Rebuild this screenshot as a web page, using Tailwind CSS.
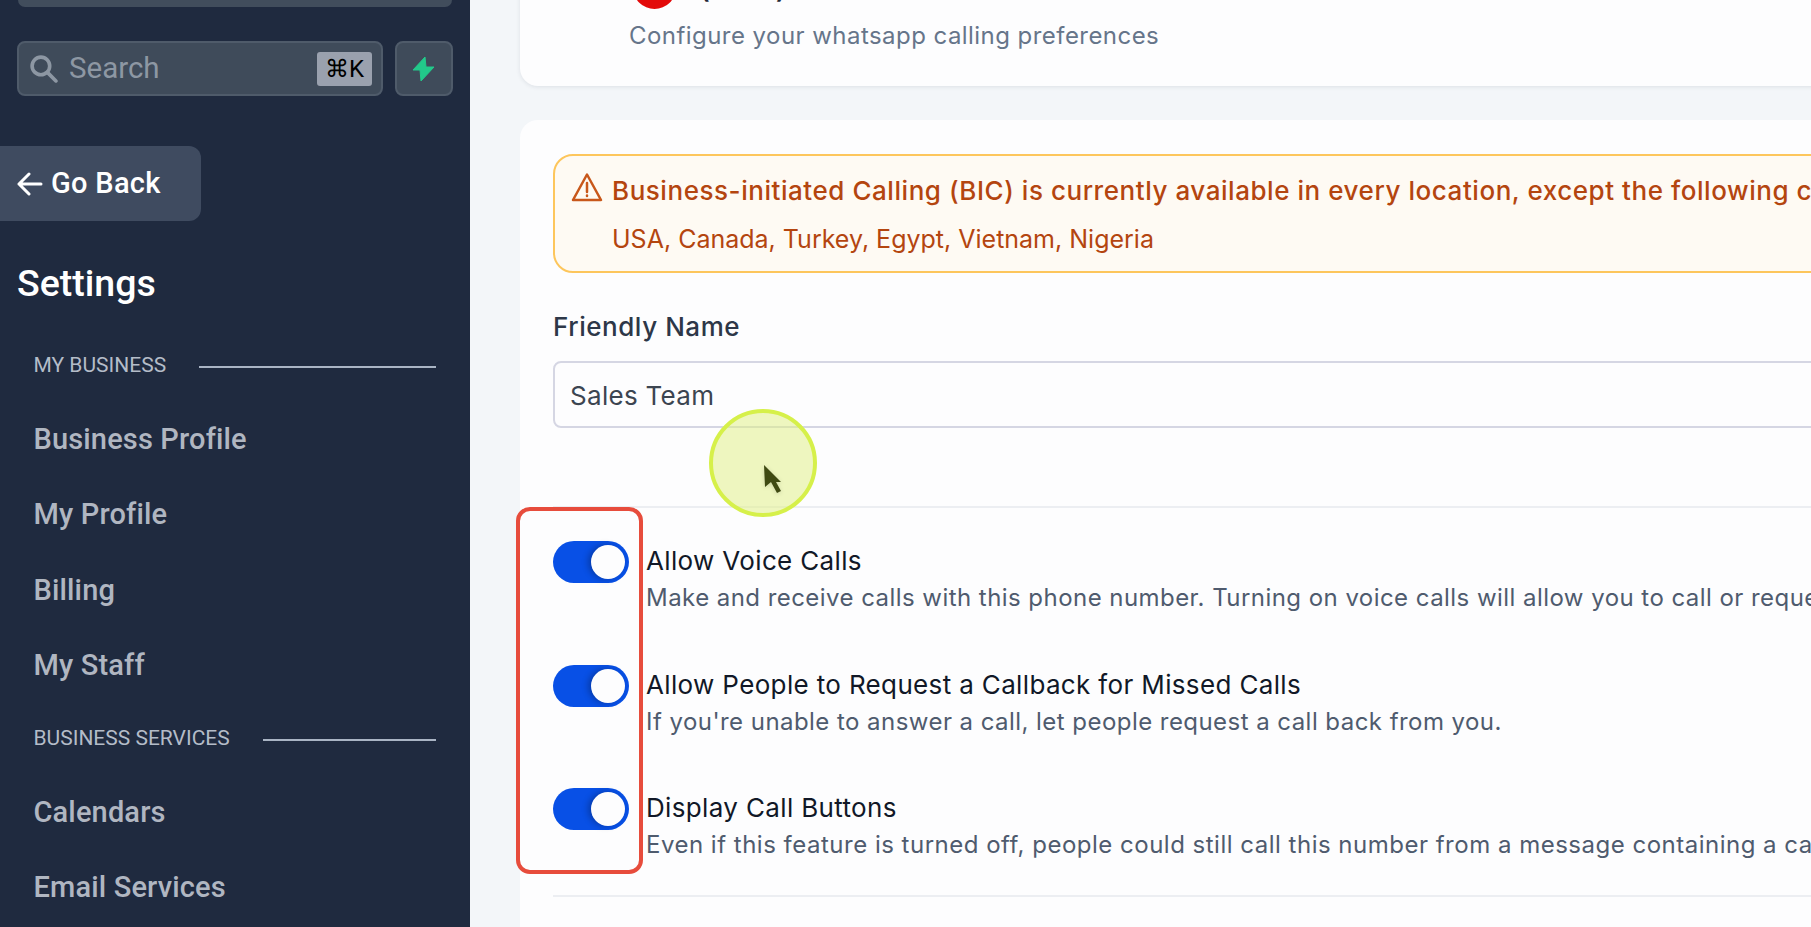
<!DOCTYPE html>
<html lang="en">
<head>
    <meta charset="UTF-8">
    <meta name="viewport" content="width=device-width, initial-scale=1.0">
    <title>Settings</title>
    <script src="https://cdn.jsdelivr.net/npm/@tailwindcss/browser@4"></script>
</head>
<body class="h-screen overflow-hidden bg-[#f3f6f9] font-['Inter',sans-serif]">
<div class="flex h-[927px] w-[1811px] overflow-hidden">

    <!-- sidebar -->
    <aside class="w-[470px] shrink-0 h-full overflow-hidden bg-[#1f2a3f] font-['Roboto',sans-serif]">
        <div class="ml-[18px] mr-[18px] h-[7px] rounded-b-xl bg-[#414d5c]"></div>

        <div class="mt-[34px] pl-[17px] pr-[17px] flex gap-[12px]">
            <div class="flex items-center w-[366px] h-[55px] rounded-lg border-2 border-[#4f5b6a] bg-[#3f4b5a] pl-[10px] pr-[9px]">
                <svg class="w-[29px] h-[29px] shrink-0" viewBox="0 0 28 28" fill="none" stroke="#8d97a3" stroke-width="3.500" stroke-linecap="round">
                    <circle cx="11.5" cy="11.5" r="8.5"/>
                    <path d="M18 18l8 8"/>
                </svg>
                <span class="ml-[11px] text-[29.500px] text-[#8d97a3]">Search</span>
                <span class="ml-auto flex items-center justify-center w-[55px] h-[34px] rounded-[3px] bg-[#9aa1ae] text-[24px] text-black">⌘K</span>
            </div>
            <div class="flex items-center justify-center w-[58px] h-[55px] rounded-lg border-2 border-[#4f5b6a] bg-[#3f4b5a]">
                <svg class="w-[24px] h-[26px] -translate-x-[1px]" viewBox="0 0 24 26" fill="#22c98a" stroke="#22c98a" stroke-linejoin="round">
                    <path d="M14 1L2 14h7l1 11 13-14h-8z"/>
                </svg>
            </div>
        </div>

        <div class="mt-[50px] flex items-center w-[201px] h-[75px] rounded-r-xl bg-[#3f4b60] pl-[17px] text-white">
            <svg class="w-[26px] h-[24px]" viewBox="0 0 26 24" fill="none" stroke="currentColor" stroke-width="3" stroke-linecap="round" stroke-linejoin="round">
                <path d="M24 12H2M12 2L2 12l10 10"/>
            </svg>
            <span class="ml-[8px] text-[29px] tracking-[0.3px] font-medium">Go Back</span>
        </div>

        <h1 class="mt-[41px] pl-[17px] text-[37.500px] leading-[42px] font-medium text-white">Settings</h1>

        <div class="mt-[47px] pl-[33.500px] pr-[34px] flex items-center h-[30px]">
            <span class="text-[21px] text-[#b4bcc8]">MY BUSINESS</span>
            <span class="ml-[33px] flex-1 h-[2px] bg-[#a9b4c4] translate-y-[1px]"></span>
        </div>
        <nav class="mt-[41px] pl-[33.500px] flex flex-col gap-[41.300px] text-[29px] tracking-[0.15px] leading-[34px] font-medium text-[#b0b6c1]">
            <a>Business Profile</a>
            <a>My Profile</a>
            <a>Billing</a>
            <a>My Staff</a>
        </nav>
        <div class="mt-[42px] pl-[33.500px] pr-[34px] flex items-center h-[30px]">
            <span class="text-[21px] text-[#b4bcc8]">BUSINESS SERVICES</span>
            <span class="ml-[33px] flex-1 h-[2px] bg-[#a9b4c4] translate-y-[1px]"></span>
        </div>
        <nav class="mt-[41px] pl-[33.500px] flex flex-col gap-[41.300px] text-[29px] tracking-[0.15px] leading-[34px] font-medium text-[#b0b6c1]">
            <a>Calendars</a>
            <a>Email Services</a>
        </nav>
    </aside>

    <!-- main -->
    <main class="relative flex-1 min-w-0 overflow-hidden pl-[50px]">
        <section class="-mt-[50px] w-[1600px] h-[136px] rounded-[18px] bg-[#fdfdfe] shadow-[0_1px_4px_rgba(30,41,59,0.1)] pl-[109px] pt-[15px]">
            <div class="flex items-center h-[44px] pl-[4px]">
                <span class="w-[43px] h-[43px] rounded-full bg-[#e30a0a] shrink-0"></span>
                <span class="ml-[24px] text-[26px] font-semibold text-[#1f2937] translate-y-[2px]">(5550)</span>
            </div>
            <p class="mt-[13px] text-[24px] leading-[28px] tracking-[0.45px] text-[#66758a]">Configure your whatsapp calling preferences</p>
        </section>

        <section class="mt-[34px] w-[1600px] h-[900px] rounded-[18px] bg-[#fdfdfe] pl-[33px] pt-[34px]">
            <div class="w-[1500px] h-[119px] rounded-[20px] border-2 border-[#fdc65c] bg-[#fefaf3] pl-[16px] pt-[16px] text-[#b4450f]">
                <div class="flex items-center h-[36px]">
                    <svg class="w-[32px] h-[30px] shrink-0 -translate-y-[3px]" viewBox="0 0 32 30" fill="none" stroke="#c8571a" stroke-width="2.500" stroke-linejoin="round" stroke-linecap="round">
                        <path d="M16 2.500L30 28H2z"/>
                        <path d="M16 11v9M16 23.500v0.500"/>
                    </svg>
                    <span class="ml-[9px] text-[26px] tracking-[0.55px] font-medium whitespace-nowrap">Business-initiated Calling (BIC) is currently available in every location, except the following countries:</span>
                </div>
                <p class="mt-[15px] pl-[41px] text-[25px] leading-[32px]">USA, Canada, Turkey, Egypt, Vietnam, Nigeria</p>
            </div>

            <label class="block mt-[36px] text-[26px] tracking-[0.55px] leading-[36px] font-medium text-[#2d3748]">Friendly Name</label>
            <div class="mt-[16px] flex items-center w-[1500px] h-[67px] rounded-lg border-2 border-[#d5d6e3] bg-[#fdfdfe] pl-[15px] pt-[2px] text-[26px] tracking-[0.3px] text-[#3c4551]">Sales Team</div>

            <div class="mt-[78px] w-[1500px] h-[2px] bg-[#eceef2]"></div>

            <div class="mt-[33px] flex flex-col gap-[51.500px]">
                <div class="flex">
                    <span class="flex items-center justify-end w-[76px] h-[42px] rounded-full bg-[#0850e6] pr-[4px] shrink-0">
                        <span class="w-[34px] h-[34px] rounded-full bg-[#fdfdfe] shadow-[-3px_0_6px_rgba(0,0,0,0.25)]"></span>
                    </span>
                    <div class="ml-[17px] whitespace-nowrap">
                        <div class="text-[26px] tracking-[0.35px] leading-[40px] text-[#111827]">Allow Voice Calls</div>
                        <div class="pt-[1px] text-[24px] leading-[31px] tracking-[0.45px] text-[#4f5b6e]">Make and receive calls with this phone number. Turning on voice calls will allow you to call or request a call</div>
                    </div>
                </div>
                <div class="flex">
                    <span class="flex items-center justify-end w-[76px] h-[42px] rounded-full bg-[#0850e6] pr-[4px] shrink-0">
                        <span class="w-[34px] h-[34px] rounded-full bg-[#fdfdfe] shadow-[-3px_0_6px_rgba(0,0,0,0.25)]"></span>
                    </span>
                    <div class="ml-[17px] whitespace-nowrap">
                        <div class="text-[26px] tracking-[0.35px] leading-[40px] text-[#111827]">Allow People to Request a Callback for Missed Calls</div>
                        <div class="pt-[1px] text-[24px] leading-[31px] tracking-[0.45px] text-[#4f5b6e]">If you're unable to answer a call, let people request a call back from you.</div>
                    </div>
                </div>
                <div class="flex">
                    <span class="flex items-center justify-end w-[76px] h-[42px] rounded-full bg-[#0850e6] pr-[4px] shrink-0">
                        <span class="w-[34px] h-[34px] rounded-full bg-[#fdfdfe] shadow-[-3px_0_6px_rgba(0,0,0,0.25)]"></span>
                    </span>
                    <div class="ml-[17px] whitespace-nowrap">
                        <div class="text-[26px] tracking-[0.35px] leading-[40px] text-[#111827]">Display Call Buttons</div>
                        <div class="pt-[1px] text-[24px] leading-[31px] tracking-[0.5px] text-[#4f5b6e]">Even if this feature is turned off, people could still call this number from a message containing a call link</div>
                    </div>
                </div>
            </div>

            <div class="mt-[35px] w-[1500px] h-[2px] bg-[#eceef2]"></div>
        </section>

        <!-- highlight box and cursor sit over the form -->
        <div class="absolute left-[46px] top-[507px] w-[127px] h-[367px] rounded-[14px] border-[4px] border-[#e74c3c]"></div>
        <div class="absolute left-[239px] top-[409px] w-[108px] h-[108px] rounded-full border-[4px] border-[#d6f04a] bg-[#dff07f]/50"></div>
        <svg class="absolute left-[293px] top-[464px] w-[20px] h-[31px] drop-shadow-sm" viewBox="0 0 20 31" fill="#3f4a12">
            <path d="M1 1l1 22 6-5 6 11 4-2-5-9h5z"/>
        </svg>
    </main>
</div>
</body>
</html>
